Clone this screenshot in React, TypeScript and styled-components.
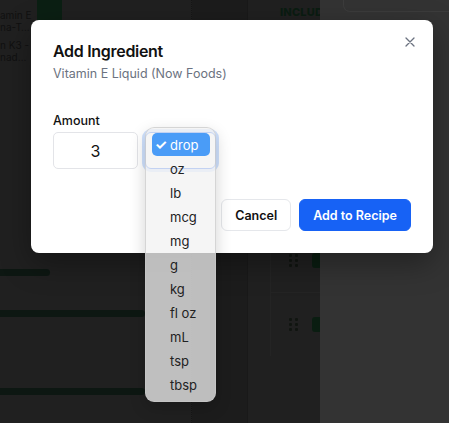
import React from "react";
import styled, { createGlobalStyle } from "styled-components";

const Global = createGlobalStyle`
  html, body { margin: 0; padding: 0; height: 100%; }
  body { font-family: Inter, "Noto Sans", "Liberation Sans", sans-serif; background: #202020; overflow: hidden; }
  * { box-sizing: border-box; }
`;

const Page = styled.div`
  position: relative;
  width: 449px;
  height: 423px;
  display: grid;
  grid-template-columns: 320px 1fr;
  overflow: hidden;
`;

const MainArea = styled.div`
  background: #202020;
  display: grid;
  grid-template-columns: 192px 1fr 72px;
  position: relative;
`;

const ListCol = styled.div`
  display: flex;
  flex-direction: column;
  padding-top: 9px;
  border-right: 1px dotted #161616;
`;

const GhostItem = styled.div`
  font-size: 10px;
  line-height: 12px;
  color: #101010;
  height: 30px;
`;

const GhostBar = styled.div<{ $w: number; $mt: number }>`
  height: 7px;
  width: ${(p) => p.$w}px;
  margin-top: ${(p) => p.$mt}px;
  background: #0d1712;
  border-radius: 0 4px 4px 0;
`;

const GreenTab = styled.div`
  position: absolute;
  left: 37px;
  top: 0;
  width: 25px;
  height: 20px;
  background: #0b1f13;
`;

const MidCol = styled.div`
  background: #1c1c1c;
  border-right: 1px solid #191919;
`;

const SideCol = styled.div`
  display: flex;
  flex-direction: column;
`;

const IncludeLabel = styled.div`
  font-size: 11px;
  font-weight: 800;
  color: #0a1c11;
  padding: 5px 0 0 32px;
  letter-spacing: 0.2px;
  height: 228px;
  white-space: nowrap;
  overflow: hidden;
`;

const SideCard = styled.div`
  height: 64px;
  margin-left: 22px;
  border-top: 1px solid #242424;
  border-left: 1px solid #242424;
  display: flex;
  align-items: center;
  gap: 14px;
  padding-left: 18px;
`;

const Dots = styled.div`
  display: grid;
  grid-template-columns: 3px 3px;
  gap: 2px 3px;
  span { width: 3px; height: 3px; background: #101510; border-radius: 1px; }
`;

const GreenChip = styled.div`
  width: 10px;
  height: 15px;
  background: #0a1d11;
  border-radius: 3px 0 0 3px;
`;

const RightPanel = styled.div`
  background: #333333;
  padding: 0 0 0 23px;
`;

const PanelBox = styled.div`
  height: 12px;
  border: 1px solid #3c3c3c;
  border-top: none;
  border-right: none;
  border-radius: 0 0 0 7px;
`;

const Backdrop = styled.div`
  position: absolute;
  inset: 0;
  display: flex;
  align-items: flex-start;
  justify-content: flex-start;
  padding: 20px 0 0 31px;
`;

const Modal = styled.div`
  position: relative;
  width: 402px;
  height: 233px;
  background: #ffffff;
  border-radius: 8px;
  padding: 20px 22px 22px;
  display: flex;
  flex-direction: column;
  box-shadow: 0 10px 30px rgba(0, 0, 0, 0.35);
`;

const Title = styled.h2`
  margin: 0;
  font-size: 16px;
  line-height: 22px;
  font-weight: 600;
  color: #111111;
  letter-spacing: -0.3px;
`;

const Subtitle = styled.p`
  margin: 3px 0 0;
  font-size: 12.5px;
  line-height: 18px;
  color: #6b7280;
`;

const Field = styled.div`
  margin-top: 30px;
  display: flex;
  flex-direction: column;
  gap: 3px;
`;

const Label = styled.label`
  font-size: 12.5px;
  line-height: 16px;
  font-weight: 500;
  color: #111111;
`;

const FieldRow = styled.div`
  display: flex;
  gap: 7px;
  align-items: center;
  position: relative;
`;

const AmountInput = styled.div`
  width: 85px;
  height: 37px;
  border: 1px solid #e3e4e8;
  border-radius: 5px;
  display: flex;
  align-items: center;
  justify-content: center;
  font-size: 16px;
  color: #111;
`;

const UnitSelect = styled.div`
  width: 71px;
  height: 37px;
  border: 1px solid #2e6ef0;
  border-radius: 6px;
  box-shadow: 0 0 0 3px #cfe1fd;
`;

const Popup = styled.ul`
  position: absolute;
  left: 92px;
  top: -5px;
  width: 71px;
  margin: 0;
  padding: 5px 5px 4px 6px;
  list-style: none;
  background: rgba(242, 242, 242, 0.76);
  border: 1px solid rgba(200, 200, 200, 0.7);
  border-radius: 9px;
  box-shadow: 0 6px 16px rgba(0, 0, 0, 0.18);
  z-index: 2;
`;

const Option = styled.li<{ $selected?: boolean }>`
  height: 24px;
  display: flex;
  align-items: center;
  padding-left: 3px;
  gap: 3px;
  font-size: 13px;
  border-radius: 5px;
  color: ${(p) => (p.$selected ? "#ffffff" : "#222222")};
  background: ${(p) => (p.$selected ? "#4a9cf7" : "transparent")};
  ${(p) => (p.$selected ? "height: 23px; margin-bottom: 1px;" : "")}
`;

const Check = styled.span<{ $show?: boolean }>`
  width: 12px;
  display: inline-flex;
  justify-content: center;
  visibility: ${(p) => (p.$show ? "visible" : "hidden")};
  font-size: 14px;
  font-weight: 700;
`;

const Footer = styled.div`
  margin-top: auto;
  display: flex;
  justify-content: flex-end;
  gap: 8px;
`;

const Button = styled.button<{ $primary?: boolean }>`
  height: 32px;
  padding: 0 13px;
  border-radius: 6px;
  font-family: inherit;
  font-size: 12.5px;
  font-weight: 600;
  border: 1px solid ${(p) => (p.$primary ? "#1762f5" : "#e5e7eb")};
  background: ${(p) => (p.$primary ? "#1762f5" : "#ffffff")};
  color: ${(p) => (p.$primary ? "#ffffff" : "#111111")};
`;

const CloseButton = styled.button`
  position: absolute;
  top: 13px;
  right: 14px;
  width: 18px;
  height: 18px;
  border: none;
  background: none;
  padding: 0;
  display: flex;
  align-items: center;
  justify-content: center;
  color: #6b7280;
`;

const units = ["drop", "oz", "lb", "mcg", "mg", "g", "kg", "fl oz", "mL", "tsp", "tbsp"];

export default function App() {
  return (
    <>
      <Global />
      <Page>
        <MainArea>
          <ListCol>
            <GhostItem>amin E<br />na-T…</GhostItem>
            <GhostItem>n K3 -<br />nad…</GhostItem>
            <GhostBar $w={50} $mt={200} />
            <GhostBar $w={145} $mt={34} />
            <GhostBar $w={145} $mt={71} />
          </ListCol>
          <MidCol />
          <SideCol>
            <IncludeLabel>INCLUD</IncludeLabel>
            <SideCard>
              <Dots><span /><span /><span /><span /><span /><span /></Dots>
              <GreenChip />
            </SideCard>
            <SideCard>
              <Dots><span /><span /><span /><span /><span /><span /></Dots>
              <GreenChip />
            </SideCard>
          </SideCol>
          <GreenTab />
        </MainArea>
        <RightPanel>
          <PanelBox />
        </RightPanel>
        <Backdrop>
          <Modal>
            <Title>Add Ingredient</Title>
            <Subtitle>Vitamin E Liquid (Now Foods)</Subtitle>
            <CloseButton aria-label="Close">
              <svg width="10" height="10" viewBox="0 0 10 10" fill="none" stroke="currentColor" strokeWidth="1.3" strokeLinecap="round">
                <path d="M1 1 L9 9 M9 1 L1 9" />
              </svg>
            </CloseButton>
            <Field>
              <Label>Amount</Label>
              <FieldRow>
                <AmountInput>3</AmountInput>
                <UnitSelect />
                <Popup>
                  {units.map((u, i) => (
                    <Option key={u} $selected={i === 0}>
                      <Check $show={i === 0}>✓</Check>
                      {u}
                    </Option>
                  ))}
                </Popup>
              </FieldRow>
            </Field>
            <Footer>
              <Button>Cancel</Button>
              <Button $primary>Add to Recipe</Button>
            </Footer>
          </Modal>
        </Backdrop>
      </Page>
    </>
  );
}
